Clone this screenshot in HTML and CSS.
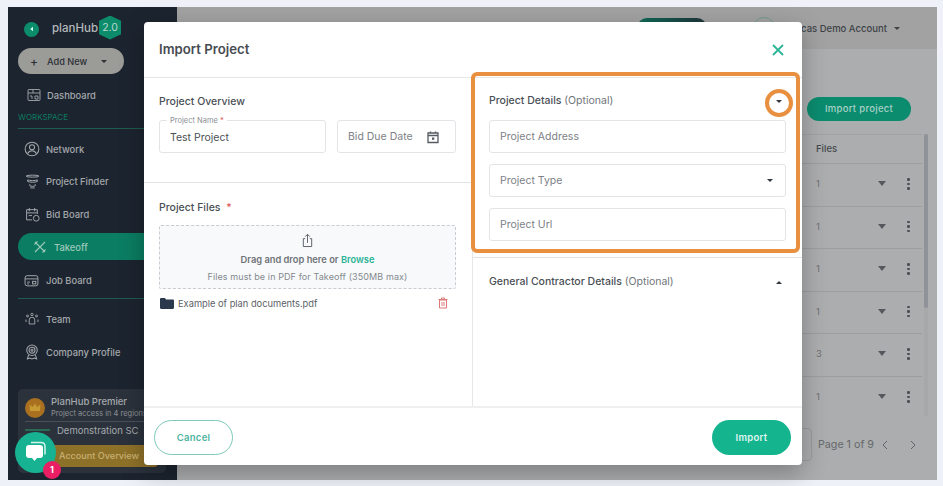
FILE: index.html
```html
<!DOCTYPE html>
<html lang="en">
<head>
<meta charset="utf-8">
<title>Import Project</title>
<link rel="stylesheet" href="styles.css">
</head>
<body>
<div class="app">
  <aside class="sidebar">
    <div class="logo-row">
      <span class="back"><svg width="6" height="6" viewBox="0 0 6 6"><path d="M4 .8v4.4L1.2 3z" fill="#cfe"/></svg></span>
      <span class="logo-text">planHub</span>
      <span class="hex">2.0</span>
    </div>
    <div class="add-new"><span class="plus">+</span><span>Add New</span><span class="caret-d"></span></div>
    <a class="nav nav-dash">
      <svg class="ico" viewBox="0 0 14 14"><rect x="1" y="1.5" width="12" height="11" rx="1"/><path d="M1 5h12M6 1.5V5M3 8h2v3M8 8h3v3H8z"/></svg>
      <span>Dashboard</span></a>
    <div class="section-label">WORKSPACE</div>
    <div class="rule"></div>
    <a class="nav nav-net">
      <svg class="ico" viewBox="0 0 14 14"><circle cx="7" cy="7" r="6"/><circle cx="7" cy="5.5" r="2.2"/><path d="M3.2 11c.8-1.8 2.2-2.5 3.8-2.5s3 .7 3.8 2.5"/></svg>
      <span>Network</span></a>
    <a class="nav nav-find">
      <svg class="ico" viewBox="0 0 14 14"><path d="M1 2c0-1.200 12-1.200 12 0s-12 1.200-12 0zM2.500 5.500c2 .9 7 .9 9 0M2.500 5.500v1.500c2 .9 7 .9 9 0V5.500M4.500 9.500v1.500c1 .7 4 .7 5 0V9.500M5 13h4"/></svg>
      <span>Project Finder</span></a>
    <a class="nav nav-bid">
      <svg class="ico" viewBox="0 0 14 14"><path d="M6.5 12H1.5V2.5h10v4M1.5 5.5h10M4 1v3M9 1v3M3.5 8h3"/><circle cx="10.500" cy="10.500" r="2.700"/></svg>
      <span>Bid Board</span></a>
    <a class="nav nav-takeoff">
      <svg class="ico" viewBox="0 0 14 14"><path d="M2 2l10 10M12 2L2 12M1.500 4.500l3-3M9.500 12.500l3-3"/></svg>
      <span>Takeoff</span></a>
    <a class="nav nav-job">
      <svg class="ico" viewBox="0 0 14 14"><rect x="1" y="2.500" width="12" height="9.500" rx="2"/><path d="M1 5.500h12M3 8.500h2.500M3 10.200h1.500"/><rect x="8" y="7.800" width="3" height="2.400"/></svg>
      <span>Job Board</span></a>
    <div class="rule rule-job"></div>
    <a class="nav nav-team">
      <svg class="ico" viewBox="0 0 14 14"><circle cx="7" cy="2.500" r="1.200"/><circle cx="2.500" cy="4" r="1"/><circle cx="11.500" cy="4" r="1"/><path d="M4.200 12V8a2.800 2.800 0 0 1 5.600 0v4zM1 10V7.500M13 10V7.500"/></svg>
      <span>Team</span></a>
    <a class="nav nav-co">
      <svg class="ico" viewBox="0 0 14 14"><circle cx="7" cy="5.500" r="4.600"/><circle cx="7" cy="5.500" r="2.600"/><circle cx="7" cy="5.500" r=".9"/><path d="M4 9.500L3 13l2-.8L7 13l2-.8 2 .8-1-3.500"/></svg>
      <span>Company Profile</span></a>
    <div class="plan-card">
      <div class="plan-top">
        <span class="medal"><svg width="12" height="9" viewBox="0 0 12 9"><path d="M1 8 .5 1.500 3.800 4 6 .5 8.200 4l3.300-2.500L11 8z" fill="#c79a34"/></svg></span>
        <div class="plan-text">
          <div class="plan-name">PlanHub Premier</div>
          <div class="plan-sub">Project access in 4 regions</div>
        </div>
      </div>
      <div class="plan-demo"><span class="demo-mark"></span><span>Demonstration SC</span></div>
      <div class="plan-btn">Account Overview</div>
    </div>
  </aside>

  <main class="main">
    <header class="topbar">
      <span class="top-pill"></span>
      <span class="top-avatar"></span>
      <span class="top-name">Lucas Demo Account</span>
      <span class="caret-d caret-top"></span>
    </header>
    <div class="actions"><span class="import-main">Import project</span></div>
    <div class="table-wrap">
      <div class="table">
        <div class="thead"><span class="files-col">Files</span></div>
        <div class="row"><span class="files-col">1</span><span class="caret-l"></span><span class="dots"><i></i><i></i><i></i></span></div>
        <div class="row"><span class="files-col">1</span><span class="caret-l"></span><span class="dots"><i></i><i></i><i></i></span></div>
        <div class="row"><span class="files-col">1</span><span class="caret-l"></span><span class="dots"><i></i><i></i><i></i></span></div>
        <div class="row"><span class="files-col">1</span><span class="caret-l"></span><span class="dots"><i></i><i></i><i></i></span></div>
        <div class="row"><span class="files-col">3</span><span class="caret-l"></span><span class="dots"><i></i><i></i><i></i></span></div>
        <div class="row"><span class="files-col">1</span><span class="caret-l"></span><span class="dots"><i></i><i></i><i></i></span></div>
      </div>
      <div class="scroll"><div class="thumb"></div></div>
    </div>
    <div class="pager">
      <span class="page-box"></span>
      <span class="page-text">Page 1 of 9</span>
      <svg class="chev" viewBox="0 0 8 12"><path d="M6 2 2 6l4 4"/></svg>
      <svg class="chev chev-next" viewBox="0 0 8 12"><path d="M2 2l4 4-4 4"/></svg>
    </div>
  </main>

  <section class="modal">
    <div class="modal-head">
      <h1>Import Project</h1>
      <svg class="close" viewBox="0 0 14 14"><path d="M2 2l10 10M12 2 2 12"/></svg>
    </div>
    <div class="modal-body">
      <div class="col-left">
        <div class="overview">
          <h2>Project Overview</h2>
          <div class="overview-fields">
            <div class="field field-name">
              <span class="float-label">Project Name <b>*</b></span>
              <span class="value">Test Project</span>
            </div>
            <div class="field field-date">
              <span class="ph">Bid Due Date</span>
              <svg class="cal" viewBox="0 0 14 14"><path d="M2 3h10v9.500H2zM2 5.500h10M4.500 1.500V3M9.500 1.500V3" fill="none" stroke="#555b62" stroke-width="1.300"/><rect x="6" y="7.500" width="2.300" height="2.300" fill="#555b62"/></svg>
            </div>
          </div>
        </div>
        <div class="files">
          <h2>Project Files <b class="req">*</b></h2>
          <div class="drop">
            <svg class="share" viewBox="0 0 14 16"><path d="M4.500 6H2.500v8.500h9V6h-2M7 10.500V1.500M4.500 3.800 7 1.300l2.500 2.500"/></svg>
            <div class="drop-main">Drag and drop here or <span>Browse</span></div>
            <div class="drop-sub">Files must be in PDF for Takeoff (350MB max)</div>
          </div>
          <div class="file-row">
            <svg class="folder" viewBox="0 0 14 11"><path d="M0 1.200C0 .5.500 0 1.200 0h3.600l1.400 1.500h6.600c.7 0 1.200.5 1.200 1.200v7c0 .7-.5 1.200-1.200 1.200H1.200C.5 10.900 0 10.400 0 9.700z" fill="#2b394c"/></svg>
            <span class="file-name">Example of plan documents.pdf</span>
            <svg class="trash" viewBox="0 0 10 12"><path d="M1.500 3h7v8h-7zM.5 2.500h9M3.500 2.500V1h3v1.500M4 5v4M6 5v4"/></svg>
          </div>
        </div>
      </div>
      <div class="col-right">
        <div class="details">
          <div class="acc-head"><h2>Project Details <em>(Optional)</em></h2><span class="tri tri-down"></span></div>
          <div class="field field-wide"><span class="ph">Project Address</span></div>
          <div class="field field-wide"><span class="ph">Project Type</span><span class="tri tri-down"></span></div>
          <div class="field field-wide"><span class="ph">Project Url</span></div>
          <span class="mark-box"></span>
          <span class="mark-ring"></span>
        </div>
        <div class="gc">
          <div class="acc-head"><h2>General Contractor Details <em>(Optional)</em></h2><span class="tri tri-up"></span></div>
        </div>
      </div>
    </div>
    <div class="modal-foot">
      <span class="btn btn-cancel">Cancel</span>
      <span class="btn btn-import">Import</span>
    </div>
  </section>

  <div class="chat">
    <svg width="24" height="23" viewBox="0 0 24 23"><path d="M7 1.500h10c2.500 0 4 1.500 4 4v8" fill="none" stroke="#d8f3ec" stroke-width="1.500"/><path d="M5 4h11c2 0 3 1 3 3v7c0 2-1 3-3 3h-3l-2.500 3L8 17H5c-2 0-3-1-3-3V7c0-2 1-3 3-3z" fill="#fff"/></svg>
    <span class="badge">1</span>
  </div>
</div>
</body>
</html>
```
FILE: styles.css
```css
* { box-sizing: border-box; }
html, body { height: 100%; }
body {
  margin: 0;
  padding: 7px 6px 6px 8px;
  background: #eef2f8;
  font-family: Inter, "Noto Sans", sans-serif;
  overflow: hidden;
}
.app {
  position: relative;
  display: flex;
  height: 473px;
  width: 929px;
}
h1, h2 { margin: 0; }

/* sidebar */
.sidebar {
  width: 169px;
  flex: none;
  display: flex;
  flex-direction: column;
  padding: 8px 0 7px 10px;
  background: #1c242f;
  color: #a5a9ad;
  font-size: 9.400px;
}
.logo-row { display: flex; align-items: center; height: 25px; padding-left: 6px; }
.back {
  width: 15px; height: 15px; margin-top: 3px; border-radius: 50%;
  background: #0c8c6b;
  display: flex; align-items: center; justify-content: center;
}
.logo-text { margin-left: 13px; font-size: 11.500px; font-weight: 500; color: #b5b9bc; }
.hex {
  width: 22px; height: 24px; margin-left: 1px;
  display: flex; align-items: center; justify-content: center;
  background: #0c8c6b; color: #b9d8ce; font-size: 10.500px;
  clip-path: polygon(50% 0, 100% 22%, 100% 78%, 50% 100%, 0 78%, 0 22%);
}
.add-new {
  display: flex; align-items: center;
  width: 106px; height: 26px; margin-top: 8px; padding-left: 12px;
  border-radius: 13px;
  background: #9b9b98; color: #2b3036;
  font-size: 9.200px; font-weight: 500;
}
.plus { font-size: 12px; margin-right: 9px; }
.caret-d {
  width: 0; height: 0; margin-left: 14px;
  border-left: 3.500px solid transparent; border-right: 3.500px solid transparent;
  border-top: 3.500px solid #2b3036;
}
.nav { display: flex; align-items: center; height: 22px; white-space: nowrap; font-weight: 500; }
.ico { width: 14px; height: 14px; fill: none; stroke: #a5a9ad; stroke-width: .9; flex: none; }
.nav-dash { margin-top: 10px; padding-left: 9px; gap: 6px; }
.section-label { margin-top: 5px; height: 12px; line-height: 12px; font-size: 8px; color: #0d7a60; }
.rule { height: 1px; margin-top: 5px; background: #1f5b4e; }
.nav-net { margin-top: 9px; padding-left: 6px; gap: 6px; }
.nav-net .ico { width: 16px; height: 16px; }
.nav-find { margin-top: 10px; padding-left: 7px; gap: 6px; }
.nav-find .ico { width: 15px; height: 15px; }
.nav-bid { margin-top: 11px; padding-left: 7px; gap: 6px; }
.nav-bid .ico { width: 15px; height: 15px; }
.nav-takeoff {
  height: 27px; margin-top: 8px; padding: 1px 0 0 15px; gap: 7px;
  background: #0b7d62; border-radius: 14px 0 0 14px;
  color: #9cc8ba;
}
.nav-takeoff .ico { stroke: #9cc8ba; stroke-width: 1.100; }
.nav-job { margin-top: 9px; padding-left: 6px; gap: 7px; }
.nav-job .ico { width: 15px; height: 15px; }
.rule-job { margin-top: 7px; }
.nav-team { margin-top: 9px; padding-left: 7px; gap: 7px; }
.nav-co { margin-top: 11px; padding-left: 6px; gap: 6px; }
.nav-co .ico { width: 16px; height: 16px; }
.plan-card {
  margin-top: auto; margin-right: 11px;
  height: 84px; padding: 7px 0 0 7px;
  background: #2b323c; border-radius: 5px;
  white-space: nowrap; overflow: hidden;
}
.plan-top { display: flex; gap: 6px; align-items: center; }
.medal {
  width: 20px; height: 20px; border-radius: 50%;
  background: #a9711f;
  display: flex; align-items: center; justify-content: center; flex: none;
}
.plan-name { font-size: 9.500px; font-weight: 500; color: #a5a9ad; line-height: 12px; }
.plan-sub { font-size: 7.500px; color: #8c9095; line-height: 11px; }
.plan-demo { display: flex; align-items: center; gap: 7px; margin-top: 2px; border-top: 1px solid #4a5058; height: 17px; font-size: 9.500px; color: #a5a9ad; }
.demo-mark { width: 25px; height: 2px; background: #2a6a53; }
.plan-btn {
  margin: 7px 0 0 23px; width: 110px; height: 22px; padding-left: 11px;
  line-height: 22px; font-size: 9.100px; font-weight: 500;
  background: #8e7129; color: #c8b071; border-radius: 4px;
}

/* page behind the dialog */
.main { flex: 1; display: flex; flex-direction: column; background: #acadae; min-width: 0; }
.topbar {
  display: flex; align-items: flex-start; height: 42px; flex: none;
  padding-left: 460px;
  background: #a2a2a3;
}
.top-pill { width: 70px; height: 20px; margin-top: 11px; border-radius: 10px 10px 0 0; background: linear-gradient(90deg, #0e6b57, #20343a); flex: none; }
.top-avatar { width: 24px; height: 24px; margin: 10px 0 0 45px; border-radius: 50%; border: 1px solid #6f9b90; flex: none; }
.top-name { margin: 16px 0 0 12px; font-size: 9.500px; font-weight: 500; color: #3e4246; white-space: nowrap; padding-left: 2px; flex: none; }
.caret-top { margin: 20px 0 0 7px; border-top-color: #3e4246; flex: none; }
.actions { display: flex; justify-content: flex-end; height: 85px; flex: none; padding: 48px 26px 0 0; }
.import-main {
  width: 104px; height: 24px; border-radius: 12px;
  background: #0b8c6f; color: #a9d0c5;
  font-size: 9.500px; font-weight: 500; text-align: center; line-height: 24px; letter-spacing: .3px;
}
.table-wrap { display: flex; flex: none; }
.table { width: 745px; border-top: 1px solid #a1a2a3; }
.thead, .row { display: flex; align-items: center; border-bottom: 1px solid #9d9e9f; }
.thead { height: 29px; padding-bottom: 2px; }
.row { height: 42.500px; padding-bottom: 2px; }
.row:last-child { border-bottom: 0; }
.files-col { margin-left: 639px; width: 62px; font-size: 9.500px; color: #6c6f73; flex: none; }
.thead .files-col { font-weight: 500; color: #45494d; }
.caret-l { width: 0; height: 0; border-left: 4.500px solid transparent; border-right: 4.500px solid transparent; border-top: 5px solid #55585c; flex: none; }
.dots { display: flex; flex-direction: column; gap: 2px; margin-left: 21px; flex: none; }
.dots i { width: 2.500px; height: 2.500px; border-radius: 50%; background: #4a4d51; display: block; }
.scroll { width: 4px; margin-left: 2px; background: #a7a8aa; height: 282px; }
.thumb { height: 174px; background: #8f9298; border-radius: 2px; }
.pager { display: flex; align-items: center; margin-top: 9px; padding-left: 560px; height: 33px; }
.page-box { width: 75px; height: 33px; border: 1px solid #9a9b9c; border-radius: 4px; flex: none; }
.page-text { margin-left: 6px; font-size: 10.700px; color: #66696d; white-space: nowrap; }
.chev { width: 8px; height: 12px; fill: none; stroke: #5f6266; stroke-width: 1; margin-left: 7px; flex: none; }
.chev-next { margin-left: 20px; }

/* dialog */
.modal {
  position: absolute; left: 136px; top: 15px;
  width: 658px; height: 443px;
  display: flex; flex-direction: column;
  background: #fff; border-radius: 4px;
  box-shadow: 0 8px 24px rgba(0, 0, 0, .28);
  color: #4a4f55;
}
.modal-head {
  display: flex; align-items: center; justify-content: space-between;
  height: 56px; flex: none; padding: 0 17px 2px 15px;
  border-bottom: 1px solid #e6e7e9;
}
h1 { font-size: 13.200px; font-weight: 600; color: #474c52; }
.close { width: 14px; height: 14px; fill: none; stroke: #2bb597; stroke-width: 1.800; margin-top: 2px; }
.modal-body { flex: 1; display: flex; min-height: 0; }
.col-left { width: 329px; flex: none; border-right: 1px solid #e6e7e9; }
.col-right { flex: 1; min-width: 0; }
h2 { font-size: 10.500px; font-weight: 500; color: #4a4f55; line-height: 14px; white-space: nowrap; }
h2 em { font-style: normal; font-weight: 400; color: #71767b; }
.overview { height: 105px; padding: 17px 16px 0 15px; border-bottom: 1px solid #e2e3e5; }
.overview-fields { display: flex; gap: 11px; margin-top: 11px; }
.field {
  position: relative; display: flex; align-items: center;
  height: 33px; border: 1px solid #e2e4e7; border-radius: 3px; padding: 0 10px;
  font-size: 10.500px;
}
.field-name { width: 167px; padding-top: 2px; }
.field-date { width: 119px; justify-content: space-between; padding-right: 15px; }
.float-label {
  position: absolute; left: 7px; top: -5px; padding: 0 3px;
  background: #fff; font-size: 7.500px; line-height: 9px; color: #8b8f94;
}
.float-label b, .req { color: #dd5a5a; font-weight: 500; }
.req { margin-left: 3px; }
.value { color: #4a4f55; }
.ph { color: #7d8186; white-space: nowrap; }
.cal { width: 14px; height: 14px; }
.files { padding: 18px 16px 0 15px; }
.drop {
  margin-top: 10px; height: 64px;
  display: flex; flex-direction: column; align-items: center;
  padding-top: 7px;
  background: #f7f9fb; border: 1px dashed #c8ccd1; border-radius: 2px;
}
.share { width: 13px; height: 15px; fill: none; stroke: #555b62; stroke-width: 1; flex: none; }
.drop-main { margin-top: 6px; font-size: 9.300px; font-weight: 600; color: #6f7378; line-height: 12px; }
.drop-main span { color: #2ab396; }
.drop-sub { margin-top: 5px; font-size: 9px; color: #85898e; line-height: 12px; letter-spacing: .1px; }
.file-row { display: flex; align-items: center; height: 16px; margin-top: 6px; padding: 0 8px 0 1px; }
.folder { width: 14px; height: 11px; flex: none; }
.file-name { margin-left: 4px; flex: 1; font-size: 9.300px; color: #5c6167; }
.trash { width: 10px; height: 12px; fill: none; stroke: #dd7a78; stroke-width: 1; }
.details { position: relative; height: 180px; padding: 16px 16px 0 16px; border-bottom: 1px solid #e2e3e5; }
.acc-head { display: flex; align-items: center; justify-content: space-between; height: 14px; padding-right: 4px; }
.details .field { margin-top: 11px; }
.details .acc-head + .field { margin-top: 12px; }
.field-wide { justify-content: space-between; padding-right: 12px; }
.tri { width: 0; height: 0; border-left: 3.500px solid transparent; border-right: 3.500px solid transparent; }
.tri-down { border-top: 3.500px solid #33383e; }
.tri-up { border-bottom: 3.500px solid #33383e; }
.mark-box {
  position: absolute; left: -2px; top: -6px;
  width: 329px; height: 181px;
  border: 4px solid #e8903f; border-radius: 6px;
}
.mark-ring {
  position: absolute; left: 292px; top: 11px;
  width: 28px; height: 28px;
  border: 4px solid #e8903f; border-radius: 50%;
}
.gc { padding: 17px 16px 0 16px; }
.modal-foot {
  display: flex; align-items: center; justify-content: space-between;
  height: 59px; flex: none; padding: 2px 11px 0 10px;
  border-top: 2px solid #eeeff1;
}
.btn {
  width: 79px; height: 35px; border-radius: 18px;
  font-size: 9.500px; font-weight: 600; text-align: center; line-height: 35px; letter-spacing: .3px;
}
.btn-cancel { border: 1px solid #7ec9b9; color: #4fb4a0; line-height: 33px; }
.btn-import { background: #14b48f; color: #dff5ef; }

/* chat launcher */
.chat {
  position: absolute; left: 7px; top: 425px;
  width: 41px; height: 41px; border-radius: 50%;
  background: #16b291;
  display: flex; align-items: center; justify-content: center;
}
.badge {
  position: absolute; left: 28px; top: 29px;
  width: 18px; height: 18px; border-radius: 50%;
  background: #e91e63; color: #fff;
  font-size: 9px; font-weight: 700; text-align: center; line-height: 18px;
}
```
